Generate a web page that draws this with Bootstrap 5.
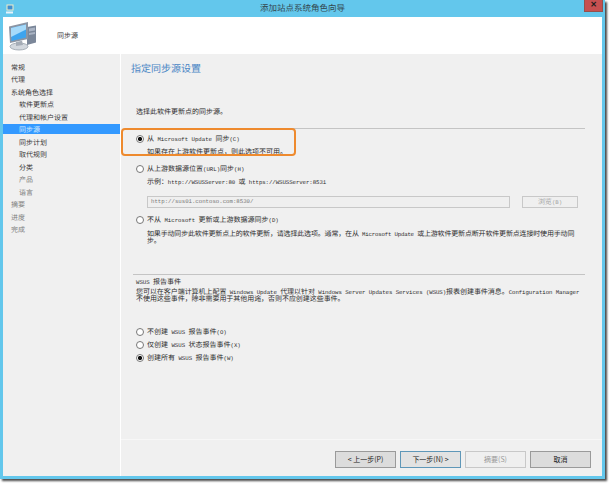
<!doctype html>
<html lang="zh">
<head>
<meta charset="utf-8">
<title>添加站点系统角色向导</title>
<link href="https://cdn.jsdelivr.net/npm/bootstrap@5.3.0/dist/css/bootstrap.min.css" rel="stylesheet">
<style>
html,body{height:100%;}
body{background:#fff;font-family:"Noto Sans CJK SC","Liberation Sans",sans-serif;font-size:7px;color:#2a2a2a;line-height:12px;overflow:hidden;text-rendering:geometricPrecision;}
.lat{font-family:"Liberation Mono","Noto Sans CJK SC",monospace;font-size:5.7px;}
.wz-win{position:relative;width:605px;height:479px;background:#f0f0f0;border:3px solid #63c7ec;border-top:0;box-shadow:2px 2px 2px #4a4a4a;}
.wz-title{height:17px;margin:0 -3px;background:#63c7ec;font-size:8.5px;line-height:17px;color:#33484f;}
.wz-title-text{width:100%;text-align:center;}
.wz-appicon{position:absolute;left:2px;top:4px;}
.wz-close{position:absolute;right:-1px;top:0;width:19px;height:12px;background:#c75050;border:1px solid #96504c;border-top:0;color:#1c1c1c;font-size:8px;line-height:10px;font-weight:700;text-align:center;font-family:"Liberation Sans",sans-serif;}
.wz-head{height:37px;background:#fff;padding-left:4px;color:#333;}
.wz-head-label{margin-left:19px;}
.wz-side{width:118px;border-right:1px solid #fff;padding-top:7.5px;}
.wz-step{height:12.5px;line-height:12.5px;padding-left:8px;color:#333;}
.wz-sub{padding-left:16px;}
.wz-on{background:linear-gradient(#3399ff,#3399ff) top/100% 10px no-repeat;color:#d8ecff;}
.wz-off{color:#7d7d7d;}
.wz-main{min-width:0;}
.wz-content{padding-left:15px;padding-top:7px;}
.wz-h{font-size:10px;line-height:14px;color:#4a86c5;margin-left:-5px;}
.wz-rule{height:1px;background:#c4c4c4;margin:0 17px 0 -3px;}
.wz-p{line-height:7px;height:14px;}
.wz-tight{letter-spacing:-.17px;}
.wz-tight-s{letter-spacing:-.05px;}
.wz-radio-row{height:12px;}
.wz-radio-row>span,.wz-line{padding-top:1px;}
.form-check-input.wz-radio{width:8px;height:8px;margin:0 3px 0 0;border:1px solid #777;border-radius:50%;background-color:#fff;flex:none;opacity:1;}
.form-check-input.wz-radio:checked{background-color:#fff;border-color:#777;background-image:radial-gradient(circle,#111 0,#111 1.8px,#fff 2.4px);}
.form-check-input.wz-radio:focus{box-shadow:none;}
.wz-ind{padding-left:11px;height:12px;}
.wz-ind.wz-p{height:14px;}
.wz-url{width:363px;height:12px;border:1px solid #c8c8c8;background:#efefef;color:#777;padding:0 3px;line-height:10px;}
.wz-browse{width:56px;height:12px;margin-left:12px;border:1px solid #c8c8c8;background:#efefef;color:#a5a5a5;text-align:center;line-height:10px;}
.mt-w1{margin-top:1px;}.mt-w4{margin-top:4px;}.mt-w5{margin-top:5px;}.mt-w55{margin-top:5.5px;}.mt-w6{margin-top:6px;}.mt-w8{margin-top:8px;}
.mt-w10{margin-top:10px;}.mt-w15{margin-top:1.5px;}.mt-w23{margin-top:23.5px;}.mt-w29{margin-top:29px;}.mt-w30{margin-top:30px;}
.wz-foot{height:37px;border-top:1px solid #f7f7f7;padding-top:11px;padding-right:11px;gap:4px;}
.wz-btn{width:61px;height:17px;padding:0;border:1px solid #9a9a9a;border-radius:0;background:#dcdcdc;color:#222;font-size:7px;line-height:15px;}
.wz-btn-def{border-color:#5f97b8;background:#e2e2e2;}
.wz-btn:disabled{border-color:#c8c8c8;background:#efefef;color:#9a9a9a;opacity:1;}
.wz-mark{position:absolute;left:118px;top:127.5px;width:175px;height:28px;border:2px solid #ee8a2e;border-radius:4px;pointer-events:none;}
</style>
</head>
<body>
<div class="wz-win d-flex flex-column">
  <div class="wz-title flex-shrink-0">
    <svg class="wz-appicon" width="10" height="10" viewBox="0 0 10 10"><rect x="2" y="1" width="6" height="5" fill="#3f8fd0" stroke="#f2ecc8" stroke-width="1"/><path d="M1 8.500h7" stroke="#e8f2fa" stroke-width="2"/></svg>
    <div class="wz-title-text">添加站点系统角色向导</div>
    <div class="wz-close">✕</div>
  </div>
  <div class="wz-head d-flex align-items-center flex-shrink-0">
    <svg width="31" height="31" viewBox="0 0 31 31">
      <ellipse cx="12" cy="26.500" rx="9" ry="3.500" fill="#d3d8de" stroke="#8d96a0" stroke-width=".7"/>
      <path d="M20 7l9-1.500v17L20 25z" fill="#7b8799"/><path d="M22 8.500l6-1v3l-6 1zM22 13l6-1v2l-6 1z" fill="#aab4c4"/>
      <path d="M2 6.500L21 2v17L3 23z" fill="#8b95a4"/><path d="M4 8l15-3.500v13L4.500 21z" fill="#3ea4ee"/><path d="M4 8l15-3.500v5L4 17z" fill="#a6dafa"/>
      <path d="M9 22l6-1.200 1 4.200-7 1z" fill="#a5acb6"/>
    </svg>
    <div class="wz-head-label">同步源</div>
  </div>
  <div class="d-flex flex-grow-1">
    <div class="wz-side flex-shrink-0">
      <div class="wz-step">常规</div>
      <div class="wz-step">代理</div>
      <div class="wz-step">系统角色选择</div>
      <div class="wz-step wz-sub">软件更新点</div>
      <div class="wz-step wz-sub">代理和帐户设置</div>
      <div class="wz-step wz-sub wz-on">同步源</div>
      <div class="wz-step wz-sub">同步计划</div>
      <div class="wz-step wz-sub">取代规则</div>
      <div class="wz-step wz-sub">分类</div>
      <div class="wz-step wz-sub wz-off">产品</div>
      <div class="wz-step wz-sub wz-off">语言</div>
      <div class="wz-step wz-off">摘要</div>
      <div class="wz-step wz-off">进度</div>
      <div class="wz-step wz-off">完成</div>
    </div>
    <div class="wz-main flex-grow-1 d-flex flex-column">
      <div class="wz-content flex-grow-1">
        <div class="wz-h">指定同步源设置</div>
        <div class="mt-w30 wz-line">选择此软件更新点的同步源。</div>
        <div class="wz-rule mt-w10"></div>
        <div class="wz-radio-row d-flex align-items-center mt-w4">
          <input class="form-check-input wz-radio" type="radio" name="src" checked>
          <span>从<span class="lat"> Microsoft Update </span>同步<span class="lat">(C)</span></span>
        </div>
        <div class="wz-ind wz-line">如果存在上游软件更新点&#xFF0C;则此选项不可用。</div>
        <div class="wz-radio-row d-flex align-items-center mt-w6">
          <input class="form-check-input wz-radio" type="radio" name="src">
          <span>从上游数据源位置<span class="lat">(URL)</span>同步<span class="lat">(H)</span></span>
        </div>
        <div class="wz-ind mt-w1 wz-tight-s">示例&#xFF1A;<span class="lat">http://WSUSServer:80 </span>或<span class="lat"> https://WSUSServer:8531</span></div>
        <div class="wz-ind d-flex mt-w8">
          <div class="wz-url lat">http://sus01.contoso.com:8530/</div>
          <div class="wz-browse">浏览<span class="lat">(B)</span></div>
        </div>
        <div class="wz-radio-row d-flex align-items-center mt-w55">
          <input class="form-check-input wz-radio" type="radio" name="src">
          <span>不从<span class="lat"> Microsoft </span>更新或上游数据源同步<span class="lat">(D)</span></span>
        </div>
        <div class="wz-ind wz-p wz-tight mt-w55">如果手动同步此软件更新点上的软件更新&#xFF0C;请选择此选项。通常&#xFF0C;在从<span class="lat"> Microsoft Update </span>或上游软件更新点断开软件更新点连接时使用手动同<br>步。</div>
        <div class="wz-rule mt-w29"></div>
        <div class="wz-radio-row wz-line"><span class="lat">WSUS </span>报告事件</div>
        <div class="wz-p wz-tight-s mt-w15"><span>您可以在客户端计算机上配置<span class="lat"> Windows Update </span>代理以针对<span class="lat"> Windows Server Updates Services (WSUS)</span>报表创建事件消息。<span class="lat">Configuration Manager</span></span><br>不使用这些事件&#xFF0C;除非需要用于其他用途&#xFF0C;否则不应创建这些事件。</div>
        <div class="wz-radio-row d-flex align-items-center mt-w23">
          <input class="form-check-input wz-radio" type="radio" name="ev">
          <span>不创建<span class="lat"> WSUS </span>报告事件<span class="lat">(O)</span></span>
        </div>
        <div class="wz-radio-row d-flex align-items-center mt-w1">
          <input class="form-check-input wz-radio" type="radio" name="ev">
          <span>仅创建<span class="lat"> WSUS </span>状态报告事件<span class="lat">(X)</span></span>
        </div>
        <div class="wz-radio-row d-flex align-items-center mt-w1">
          <input class="form-check-input wz-radio" type="radio" name="ev" checked>
          <span>创建所有<span class="lat"> WSUS </span>报告事件<span class="lat">(W)</span></span>
        </div>
      </div>
      <div class="wz-foot d-flex justify-content-end flex-shrink-0">
        <button class="btn wz-btn" type="button">&lt; 上一步(P)</button>
        <button class="btn wz-btn wz-btn-def" type="button">下一步(N) &gt;</button>
        <button class="btn wz-btn" type="button" disabled>摘要(S)</button>
        <button class="btn wz-btn" type="button">取消</button>
      </div>
    </div>
  </div>
  <div class="wz-mark"></div>
</div>
<script src="https://cdn.jsdelivr.net/npm/bootstrap@5.3.0/dist/js/bootstrap.bundle.min.js"></script>
</body>
</html>
